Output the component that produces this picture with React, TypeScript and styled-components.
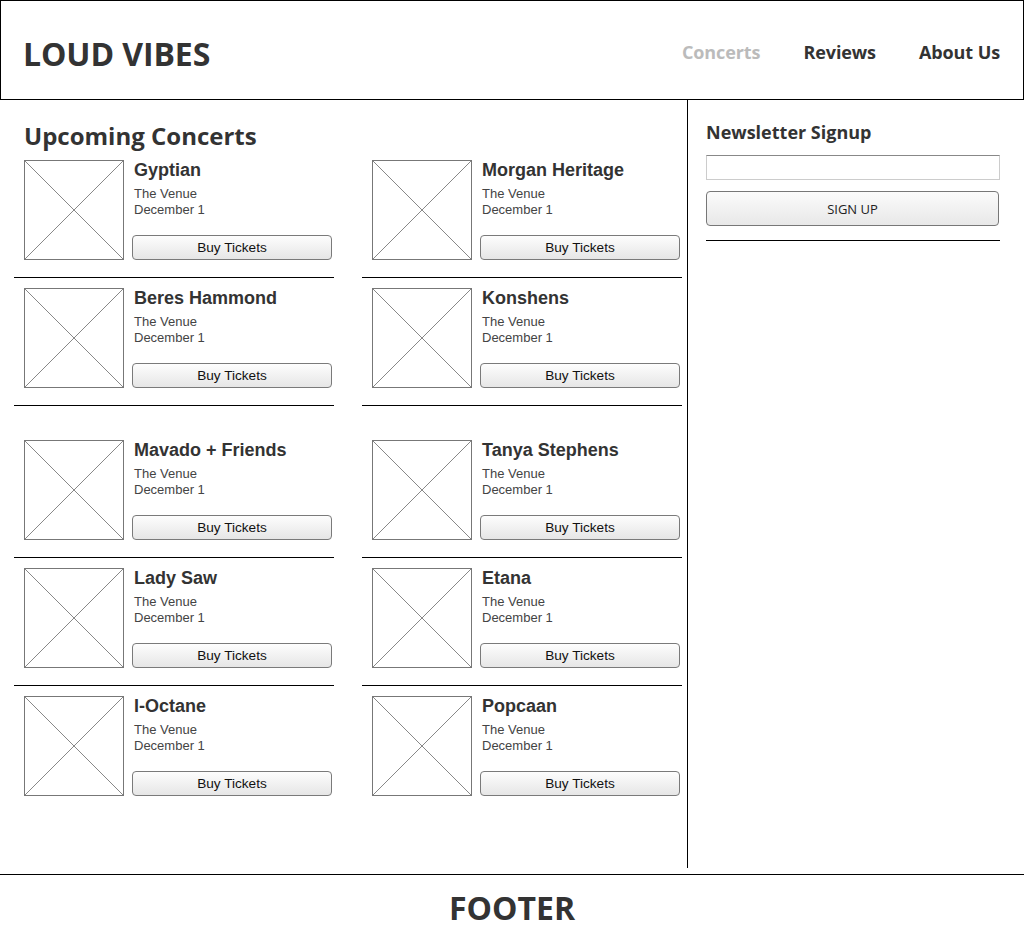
import React from 'react'
import styled, { createGlobalStyle } from 'styled-components'

const GlobalStyle = createGlobalStyle`
  body {
    margin: 0;
    background: #fff;
    font-family: 'Open Sans', 'Liberation Sans', sans-serif;
    color: #333;
  }
`

const Page = styled.div`
  width: 1024px;
`

const Header = styled.header`
  box-sizing: border-box;
  height: 100px;
  border: 1px solid #000;
  display: flex;
  align-items: center;
  justify-content: space-between;
  padding: 0 23px 0 22px;
`

const Logo = styled.h1`
  margin: 0;
  font-size: 32px;
  font-weight: 700;
  color: #333;
  line-height: 40px;
  padding-top: 8px;
  letter-spacing: -0.1px;
`

const Nav = styled.nav`
  display: flex;
  gap: 43px;
  padding-top: 4px;
`

const NavLink = styled.a<{ $active?: boolean }>`
  font-size: 18px;
  font-weight: 700;
  letter-spacing: -0.1px;
  color: ${(p) => (p.$active ? '#bbb' : '#333')};
  text-decoration: none;
  cursor: pointer;
`

const Layout = styled.div`
  display: flex;
  margin-bottom: 6px;
`

const Main = styled.main`
  box-sizing: border-box;
  width: 688px;
  min-height: 768px;
  border-right: 1px solid #000;
  padding: 22px 0 0 14px;
`

const Title = styled.h2`
  margin: 0 0 0 10px;
  font-size: 24px;
  font-weight: 700;
  line-height: 28px;
  color: #333;
`

const Group = styled.div`
  display: grid;
  grid-template-columns: 320px 320px;
  column-gap: 28px;

  & + & {
    margin-top: 24px;
  }
`

const Card = styled.div<{ $line?: boolean }>`
  display: flex;
  gap: 8px;
  padding: 10px 2px ${(p) => (p.$line ? '17px' : '18px')} 10px;
  border-bottom: ${(p) => (p.$line ? '1px solid #000' : 'none')};
`

const Thumb = styled.div`
  box-sizing: border-box;
  width: 100px;
  height: 100px;
  border: 1px solid #777;
  flex: none;

  svg {
    display: block;
  }
`

const Info = styled.div`
  flex: 1;
  height: 100px;
  display: flex;
  flex-direction: column;
  font-family: 'Liberation Sans', Arial, sans-serif;
`

const Name = styled.div`
  padding-left: 2px;
  font-size: 18px;
  font-weight: 700;
  line-height: 20px;
  color: #333;
  margin-bottom: 6px;
`

const Detail = styled.div`
  padding-left: 2px;
  font-size: 13px;
  line-height: 16px;
  color: #444;
`

const TicketButton = styled.button`
  margin-top: auto;
  box-sizing: border-box;
  height: 25px;
  width: 200px;
  border: 1px solid #7a7a7a;
  border-radius: 4px;
  background: linear-gradient(#fdfdfd, #e6e6e6);
  font-family: 'Liberation Sans', Arial, sans-serif;
  font-size: 13.6px;
  color: #111;
  padding: 0;
`

const Sidebar = styled.aside`
  flex: 1;
  padding: 20px 24px 0 18px;
`

const SideTitle = styled.h3`
  margin: 0;
  font-size: 18px;
  font-weight: 700;
  line-height: 24px;
  color: #333;
`

const EmailInput = styled.input`
  display: block;
  box-sizing: border-box;
  width: 294px;
  height: 25px;
  margin-top: 11px;
  border: 1px solid #ccc;
  border-top-color: #888;
  padding: 0 4px;
`

const SignUpButton = styled.button`
  display: block;
  box-sizing: border-box;
  width: 293px;
  height: 35px;
  margin-top: 11px;
  border: 1px solid #777;
  border-radius: 4px;
  background: linear-gradient(#fbfbfb, #e8e8e8);
  font-family: 'Open Sans', sans-serif;
  font-size: 13px;
  color: #222;
`

const Rule = styled.hr`
  margin: 14px 0 0 0;
  border: none;
  border-top: 1px solid #000;
  width: 294px;
`

const Footer = styled.footer`
  border-top: 1px solid #000;
  text-align: center;
  padding-top: 13px;
  font-size: 32px;
  font-weight: 700;
  line-height: 40px;
  color: #333;
`

type Concert = { name: string }

const firstGroup: Concert[] = [
  { name: 'Gyptian' },
  { name: 'Morgan Heritage' },
  { name: 'Beres Hammond' },
  { name: 'Konshens' },
]

const secondGroup: Concert[] = [
  { name: 'Mavado + Friends' },
  { name: 'Tanya Stephens' },
  { name: 'Lady Saw' },
  { name: 'Etana' },
  { name: 'I-Octane' },
  { name: 'Popcaan' },
]

function Placeholder() {
  return (
    <Thumb>
      <svg width="98" height="98" viewBox="0 0 98 98">
        <line x1="0" y1="0" x2="98" y2="98" stroke="#888" strokeWidth="1" />
        <line x1="98" y1="0" x2="0" y2="98" stroke="#888" strokeWidth="1" />
      </svg>
    </Thumb>
  )
}

function ConcertCard({ concert, line }: { concert: Concert; line: boolean }) {
  return (
    <Card $line={line}>
      <Placeholder />
      <Info>
        <Name>{concert.name}</Name>
        <Detail>The Venue</Detail>
        <Detail>December 1</Detail>
        <TicketButton>Buy Tickets</TicketButton>
      </Info>
    </Card>
  )
}

export default function App() {
  return (
    <Page>
      <GlobalStyle />
      <Header>
        <Logo>LOUD VIBES</Logo>
        <Nav>
          <NavLink $active>Concerts</NavLink>
          <NavLink>Reviews</NavLink>
          <NavLink>About Us</NavLink>
        </Nav>
      </Header>
      <Layout>
        <Main>
          <Title>Upcoming Concerts</Title>
          <Group>
            {firstGroup.map((c) => (
              <ConcertCard key={c.name} concert={c} line />
            ))}
          </Group>
          <Group>
            {secondGroup.map((c, i) => (
              <ConcertCard key={c.name} concert={c} line={i < secondGroup.length - 2} />
            ))}
          </Group>
        </Main>
        <Sidebar>
          <SideTitle>Newsletter Signup</SideTitle>
          <EmailInput type="text" />
          <SignUpButton>SIGN UP</SignUpButton>
          <Rule />
        </Sidebar>
      </Layout>
      <Footer>FOOTER</Footer>
    </Page>
  )
}
